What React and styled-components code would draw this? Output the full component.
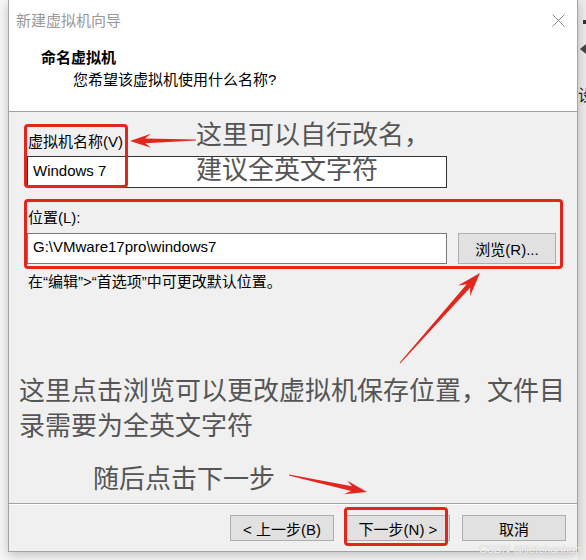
import React from 'react';
import styled, { createGlobalStyle } from 'styled-components';

const GlobalStyle = createGlobalStyle`
  html, body {
    margin: 0;
    padding: 0;
  }
  body {
    background: #f5f5f5;
    font-family: "Liberation Sans", "Noto Sans CJK SC", sans-serif;
  }
`;

const RED = '#e3261d';

const Page = styled.div`
  position: relative;
  width: 586px;
  height: 560px;
  overflow: hidden;
  display: flex;
  background: #f6f6f6;
`;

const Gutter = styled.div`
  width: 8px;
  flex: none;
`;

const Dialog = styled.div`
  position: relative;
  z-index: 1;
  flex: none;
  width: 570px;
  height: 552px;
  box-sizing: border-box;
  border: 1px solid #a3a3a3;
  border-top: none;
  display: flex;
  flex-direction: column;
  background: #f0f0f0;
  box-shadow: 0 3px 10px rgba(0, 0, 0, 0.22);
  font-size: 15px;
  color: #000;
`;

const TitleBar = styled.div`
  height: 40px;
  flex: none;
  display: flex;
  align-items: center;
  justify-content: space-between;
  padding-left: 7px;
  background: #fff;
`;

const Title = styled.span`
  color: #999;
  line-height: 20px;
  padding-top: 2px;
`;

const CloseButton = styled.div`
  width: 38px;
  height: 40px;
  display: flex;
  align-items: center;
  justify-content: center;
`;

const Header = styled.div`
  height: 72px;
  flex: none;
  box-sizing: border-box;
  padding: 8px 0 0 32px;
  background: #fff;
  border-bottom: 1px solid #a0a0a0;
`;

const Heading = styled.div`
  font-weight: bold;
  line-height: 20px;
`;

const SubHeading = styled.div`
  margin: 2px 0 0 32px;
  line-height: 20px;
`;

const Body = styled.div`
  flex: 1;
  padding: 20px 18px 0;
`;

const Label = styled.div`
  line-height: 20px;
  padding-left: 1px;
  margin-top: ${(p) => p.$gap || 0}px;
`;

const Input = styled.div`
  width: 420px;
  height: ${(p) => (p.$focused ? 32 : 31)}px;
  box-sizing: border-box;
  margin-top: ${(p) => p.$gap || 0}px;
  padding: 0 0 4px 5px;
  display: flex;
  align-items: center;
  background: #fff;
  border: 1px solid ${(p) => (p.$focused ? '#333' : '#7a7a7a')};
  white-space: nowrap;
`;

const Row = styled.div`
  display: flex;
  align-items: center;
  gap: 11px;
  margin-top: 5px;
`;

const Button = styled.div`
  width: ${(p) => p.$w}px;
  height: ${(p) => p.$h}px;
  box-sizing: border-box;
  display: flex;
  align-items: center;
  justify-content: center;
  background: #e1e1e1;
  border: 1px solid #adadad;
  white-space: nowrap;
`;

const Hint = styled.div`
  margin-top: 8px;
  line-height: 20px;
  padding-left: 1px;
`;

const Footer = styled.div`
  height: 48px;
  flex: none;
  box-sizing: border-box;
  display: flex;
  justify-content: flex-end;
  gap: 12px;
  padding: 11px 11px 0 0;
  border-top: 1px solid #a0a0a0;
  box-shadow: inset 0 1px 0 #fff;
`;

const SideStrip = styled.div`
  width: 8px;
  flex: none;
  display: flex;
  flex-direction: column;
  padding-top: 20px;
  background: #ebebeb;
  overflow: hidden;
`;

const Square = styled.div`
  width: 3px;
  height: 4px;
  margin-left: 5px;
  background: #333;
`;

const Notch = styled.div`
  width: 0;
  height: 0;
  margin: 20px 0 0 2px;
  border-top: 5px solid transparent;
  border-bottom: 5px solid transparent;
  border-right: 6px solid #444;
`;

const Cut = styled.div`
  margin-top: 28px;
  font-size: 16px;
  white-space: nowrap;
  color: #222;
`;

const Highlight = styled.div`
  position: absolute;
  z-index: 2;
  left: ${(p) => p.$x}px;
  top: ${(p) => p.$y}px;
  width: ${(p) => p.$w}px;
  height: ${(p) => p.$h}px;
  box-sizing: border-box;
  border: 3px solid ${RED};
  border-radius: 4px;
`;

const Note = styled.div`
  position: absolute;
  z-index: 2;
  left: ${(p) => p.$x}px;
  top: ${(p) => p.$y}px;
  width: ${(p) => p.$w || 400}px;
  font-family: "Noto Sans CJK SC", sans-serif;
  font-size: 26px;
  line-height: 35px;
  color: #555;
`;

const ArrowLayer = styled.svg`
  position: absolute;
  z-index: 3;
  left: 0;
  top: 0;
  pointer-events: none;
`;

const Watermark = styled.div`
  position: absolute;
  z-index: 3;
  right: 5px;
  bottom: 5px;
  font-size: 11px;
  color: #f2f2f2;
  text-shadow: 0 0 1px #b0b0b0;
`;

// snipping-tool style arrow: thin tail, swept-back head
const arrowPoints = (x1, y1, x2, y2, head = 20, wing = 8) => {
  const dx = x2 - x1;
  const dy = y2 - y1;
  const len = Math.hypot(dx, dy);
  const ux = dx / len;
  const uy = dy / len;
  const nx = -uy;
  const ny = ux;
  const neck = [x2 - ux * head * 0.72, y2 - uy * head * 0.72];
  const back = [x2 - ux * head, y2 - uy * head];
  const pts = [
    [x1 + nx * 0.5, y1 + ny * 0.5],
    [neck[0] + nx * 2.4, neck[1] + ny * 2.4],
    [back[0] + nx * wing, back[1] + ny * wing],
    [x2, y2],
    [back[0] - nx * wing, back[1] - ny * wing],
    [neck[0] - nx * 2.4, neck[1] - ny * 2.4],
    [x1 - nx * 0.5, y1 - ny * 0.5],
  ];
  return pts.map((p) => p.map((v) => v.toFixed(1)).join(',')).join(' ');
};

const arrows = [
  { from: [196, 140], to: [130, 141], head: 21, wing: 7 },
  { from: [400, 363], to: [480, 273], head: 24, wing: 8 },
  { from: [289, 475], to: [367, 492], head: 22, wing: 7 },
];

const App = () => {
  return (
    <>
      <GlobalStyle />
      <Page>
        <Gutter />
        <Dialog>
          <TitleBar>
            <Title>新建虚拟机向导</Title>
            <CloseButton>
              <svg width="13" height="13" viewBox="0 0 13 13">
                <path d="M0.5 0.5 L12.5 12.5 M12.5 0.5 L0.5 12.5" stroke="#888" strokeWidth="1" />
              </svg>
            </CloseButton>
          </TitleBar>
          <Header>
            <Heading>命名虚拟机</Heading>
            <SubHeading>您希望该虚拟机使用什么名称?</SubHeading>
          </Header>
          <Body>
            <Label>虚拟机名称(V)</Label>
            <Input $focused $gap={4}>Windows 7</Input>
            <Label $gap={20}>位置(L):</Label>
            <Row>
              <Input>G:\VMware17pro\windows7</Input>
              <Button $w={98} $h={31}>浏览(R)...</Button>
            </Row>
            <Hint>在“编辑”&gt;“首选项”中可更改默认位置。</Hint>
          </Body>
          <Footer>
            <Button $w={104} $h={26}>&lt; 上一步(B)</Button>
            <Button $w={104} $h={26}>下一步(N) &gt;</Button>
            <Button $w={104} $h={26}>取消</Button>
          </Footer>
        </Dialog>
        <SideStrip>
          <Square />
          <Notch />
          <Cut>设</Cut>
        </SideStrip>

        <Highlight $x={24} $y={124} $w={104} $h={64} />
        <Highlight $x={24} $y={199} $w={539} $h={70} />
        <Highlight $x={344} $y={507} $w={104} $h={39} />

        <Note $x={196} $y={115}>
          这里可以自行改名，
          <br />
          建议全英文字符
        </Note>
        <Note $x={19} $y={371} $w={550}>
          这里点击浏览可以更改虚拟机保存位置，文件目录需要为全英文字符
        </Note>
        <Note $x={93} $y={459}>随后点击下一步</Note>

        <ArrowLayer width="586" height="560" viewBox="0 0 586 560">
          {arrows.map((a, i) => (
            <polygon
              key={i}
              points={arrowPoints(a.from[0], a.from[1], a.to[0], a.to[1], a.head, a.wing)}
              fill={RED}
            />
          ))}
        </ArrowLayer>
        <Watermark>CSDN @jietehanhan</Watermark>
      </Page>
    </>
  );
};

export default App;
